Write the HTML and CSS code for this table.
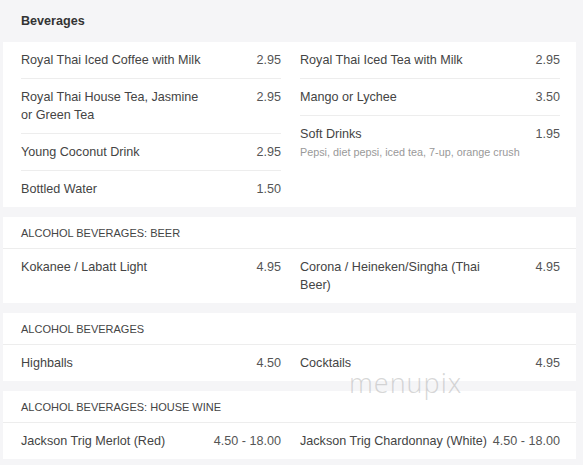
FILE: index.html
```html
<!DOCTYPE html>
<html lang="en">
<head>
    <meta charset="UTF-8">
    <meta name="viewport" content="width=device-width, initial-scale=1.0">
    <title>Menu - Beverages</title>
    <link rel="stylesheet" href="styles.css">
</head>
<body>
    <div class="menu">
        <h2 class="menu-title">Beverages</h2>

        <div class="card">
            <div class="cols">
                <div class="col">
                    <div class="item"><span class="name">Royal Thai Iced Coffee with Milk</span><span class="price">2.95</span></div>
                    <div class="item"><span class="name">Royal Thai House Tea, Jasmine or Green Tea</span><span class="price">2.95</span></div>
                    <div class="item"><span class="name">Young Coconut Drink</span><span class="price">2.95</span></div>
                    <div class="item"><span class="name">Bottled Water</span><span class="price">1.50</span></div>
                </div>
                <div class="col">
                    <div class="item"><span class="name">Royal Thai Iced Tea with Milk</span><span class="price">2.95</span></div>
                    <div class="item"><span class="name">Mango or Lychee</span><span class="price">3.50</span></div>
                    <div class="item">
                        <span class="name">Soft Drinks<small class="desc">Pepsi, diet pepsi, iced tea, 7-up, orange crush</small></span>
                        <span class="price">1.95</span>
                    </div>
                </div>
            </div>
        </div>

        <div class="card">
            <div class="card-head">Alcohol Beverages: Beer</div>
            <div class="cols">
                <div class="col">
                    <div class="item"><span class="name">Kokanee / Labatt Light</span><span class="price">4.95</span></div>
                </div>
                <div class="col">
                    <div class="item"><span class="name">Corona / Heineken/Singha (Thai Beer)</span><span class="price">4.95</span></div>
                </div>
            </div>
        </div>

        <div class="card">
            <div class="card-head">Alcohol Beverages</div>
            <div class="cols">
                <div class="col">
                    <div class="item"><span class="name">Highballs</span><span class="price">4.50</span></div>
                </div>
                <div class="col">
                    <div class="item"><span class="name">Cocktails</span><span class="price">4.95</span></div>
                </div>
            </div>
        </div>

        <div class="card">
            <div class="card-head">Alcohol Beverages: House Wine</div>
            <div class="cols">
                <div class="col">
                    <div class="item"><span class="name">Jackson Trig Merlot (Red)</span><span class="price">4.50 - 18.00</span></div>
                </div>
                <div class="col">
                    <div class="item"><span class="name">Jackson Trig Chardonnay (White)</span><span class="price">4.50 - 18.00</span></div>
                </div>
            </div>
        </div>

        <div class="watermark">menupix</div>
    </div>
</body>
</html>
```

FILE: styles.css
```css
body {
    margin: 0;
    background: #f5f5f7;
    font-family: "Liberation Sans", Arial, sans-serif;
    color: #444;
    font-size: 12.6px;
}
.menu {
    position: relative;
    padding: 0 7px 0 3px;
}
.menu-title {
    margin: 0;
    height: 42px;
    line-height: 43px;
    padding: 0 18px;
    font-size: 12.6px;
    font-weight: bold;
    color: #333;
}
.card {
    background: #fff;
    margin-bottom: 10px;
}
.card-head {
    padding: 8px 18px 6px;
    line-height: 17px;
    font-size: 11px;
    text-transform: uppercase;
    color: #444;
    border-bottom: 1px solid #ededed;
}
.cols {
    display: grid;
    grid-template-columns: 260px 260px;
    column-gap: 19px;
    padding: 0 16px 0 18px;
}
.item {
    display: flex;
    justify-content: space-between;
    align-items: flex-start;
    gap: 2px;
    padding: 9px 0;
    line-height: 18px;
    border-bottom: 1px solid #ededed;
}
.item:last-child { border-bottom: none; }
.name {
    max-width: 190px;
}
.price {
    flex-shrink: 0;
    color: #555;
    white-space: nowrap;
}
.desc {
    display: block;
    font-size: 10.8px;
    color: #999;
    white-space: nowrap;
}
.watermark {
    position: absolute;
    left: 349px;
    top: 364px;
    font-family: "Open Sans", sans-serif;
    font-weight: 300;
    font-size: 27px;
    letter-spacing: 1px;
    color: rgba(175, 175, 175, 0.5);
    pointer-events: none;
}
```
